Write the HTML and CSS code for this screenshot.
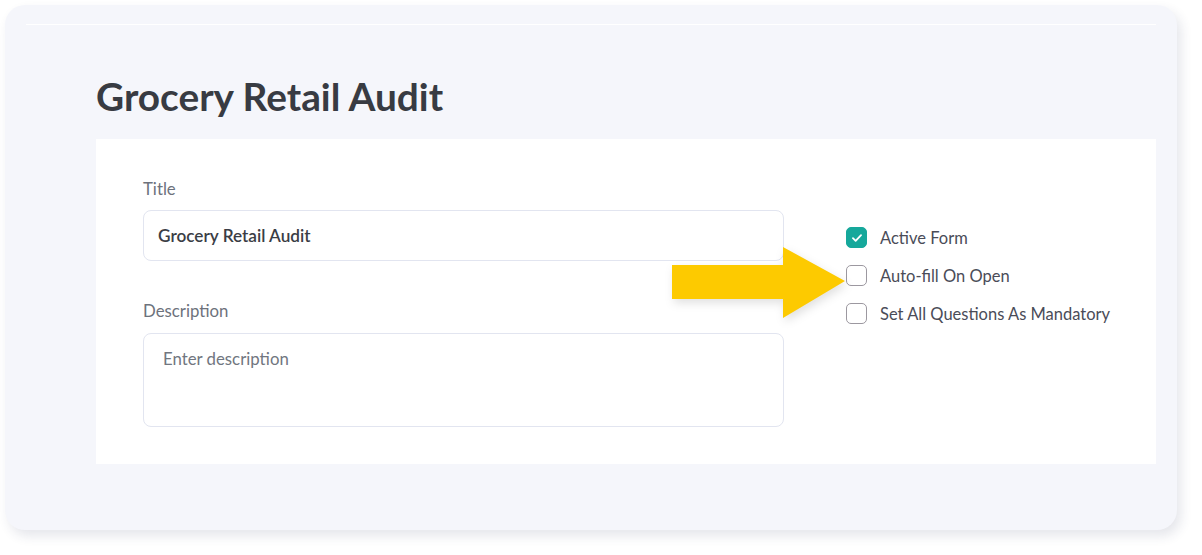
FILE: index.html
```html
<!DOCTYPE html>
<html>
<head>
<meta charset="utf-8">
<link rel="stylesheet" href="styles.css">
</head>
<body>
<div class="card">
  <div class="rule"></div>
  <div class="content">
    <h1 class="page-title">Grocery Retail Audit</h1>
    <div class="panel">
      <div class="fields">
        <div class="label">Title</div>
        <div class="input">Grocery Retail Audit</div>
        <div class="label label-desc">Description</div>
        <div class="textarea">Enter description</div>
      </div>
      <div class="options">
        <div class="opt"><span class="box checked"><svg viewBox="0 0 20 20" width="20" height="20"><path d="M5.5 10.2l3 3 6-6.4" fill="none" stroke="#fff" stroke-width="2" stroke-linecap="round" stroke-linejoin="round"/></svg></span><span>Active Form</span></div>
        <div class="opt"><span class="box"></span><span>Auto-fill On Open</span></div>
        <div class="opt"><span class="box"></span><span>Set All Questions As Mandatory</span></div>
      </div>
    </div>
  </div>
  <svg class="arrow" width="180" height="76" viewBox="0 0 180 76">
    <path d="M0 18 H111 V0 L173 34 L111 71 V52 H0 Z" fill="#fdca00"/>
  </svg>
</div>
</body>
</html>
```
FILE: styles.css
```css
html, body {
  margin: 0;
  padding: 0;
  background: #ffffff;
}
body {
  font-family: Lato, "Open Sans", sans-serif;
  width: 1202px;
  height: 555px;
  overflow: hidden;
}
.card {
  position: relative;
  margin: 5px 0 0 5px;
  width: 1172px;
  height: 525px;
  box-sizing: border-box;
  background: #f5f6fb;
  border-radius: 20px;
  box-shadow: 4px 6px 12px rgba(40, 50, 90, 0.12);
  padding-top: 19px;
}
.rule {
  margin: 0 21px;
  height: 1px;
  background: #ffffff;
}
.content {
  padding: 0 21px 0 91px;
}
.page-title {
  margin: 0;
  padding-top: 48px;
  height: 66px;
  font-size: 38.8px;
  font-weight: 700;
  color: #383b42;
  line-height: 46px;
  letter-spacing: 0;
}
.panel {
  background: #ffffff;
  height: 325px;
  box-sizing: border-box;
  padding: 41px 0 0 47px;
  display: flex;
}
.fields {
  width: 641px;
  display: flex;
  flex-direction: column;
}
.label {
  font-size: 16.8px;
  color: #6d727c;
  line-height: 18px;
  height: 18px;
}
.label-desc {
  margin-top: 41px;
}
.input {
  margin-top: 12px;
  height: 51px;
  box-sizing: border-box;
  border: 1px solid #e2e5f0;
  border-radius: 8px;
  padding: 0 14px;
  display: flex;
  align-items: center;
  font-size: 17.2px;
  font-weight: 600;
  color: #3a3d45;
}
.textarea {
  margin-top: 13px;
  height: 94px;
  box-sizing: border-box;
  border: 1px solid #e2e5f0;
  border-radius: 8px;
  padding: 16px 19px;
  font-size: 16.8px;
  color: #717680;
  line-height: 18px;
}
.options {
  margin-left: 62px;
  padding-top: 47px;
  display: flex;
  flex-direction: column;
  gap: 17px;
}
.opt {
  display: flex;
  align-items: center;
  gap: 13px;
  font-size: 16.5px;
  color: #4a4c58;
  height: 21px;
}
.box {
  width: 21px;
  height: 21px;
  box-sizing: border-box;
  border: 1.5px solid #9c98a0;
  border-radius: 5px;
  display: flex;
  align-items: center;
  justify-content: center;
  flex-shrink: 0;
}
.box.checked {
  background: #16a89b;
  border-color: #16a89b;
}
.box svg {
  width: 18px;
  height: 18px;
}
.arrow {
  position: absolute;
  left: 667px;
  top: 242px;
  filter: drop-shadow(2px 4px 5px rgba(0, 0, 0, 0.12));
}
```
